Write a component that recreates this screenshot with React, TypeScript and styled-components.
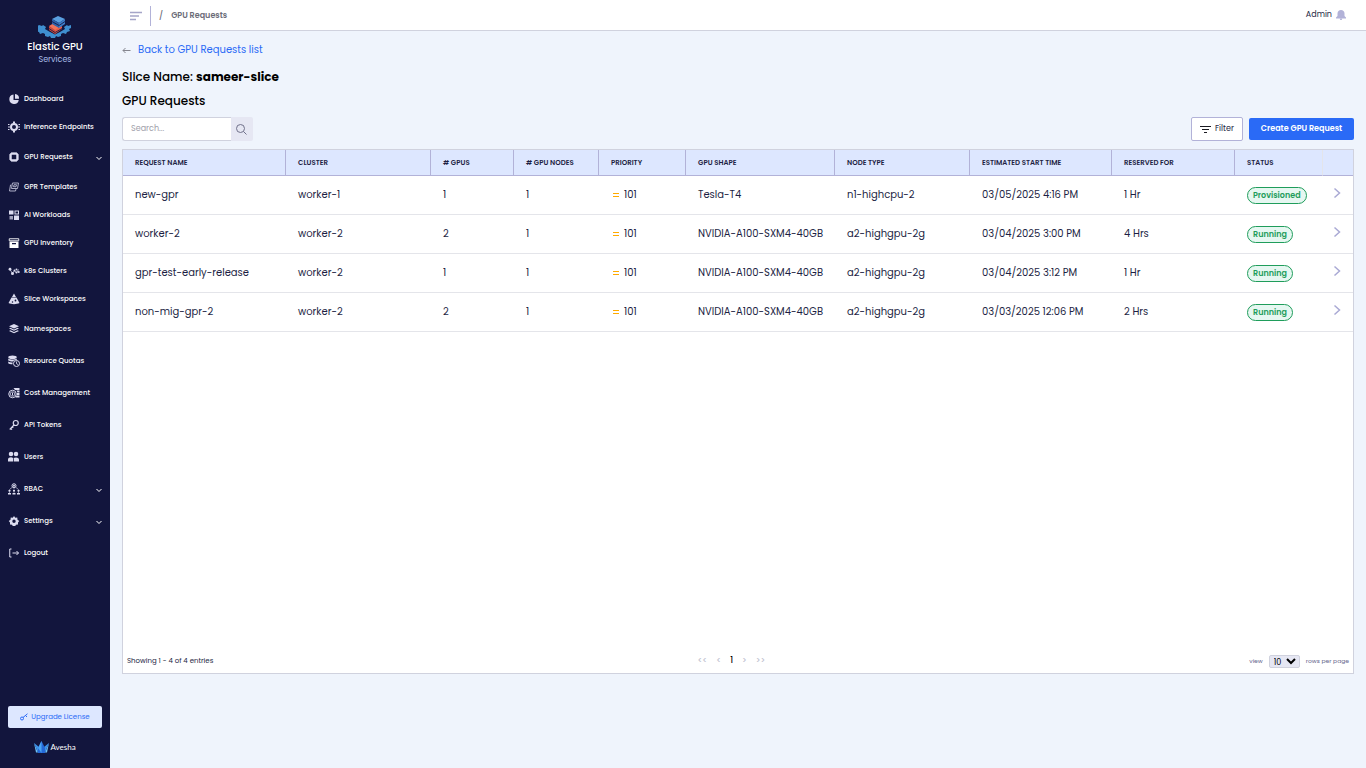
import React from "react";
import styled, { createGlobalStyle } from "styled-components";

const color = {
  navy: "#12153d",
  page: "#eff4fc",
  icon: "#dcdcf0",
  lilac: "#b2b2d8",
  line: "#d0d2de",
  rowLine: "#e4e5ea",
  head: "#dde7ff",
  blue: "#2a6af6",
  text: "#1d1f44",
  green: "#1f9d5b",
};

const GlobalStyle = createGlobalStyle`
  *, *::before, *::after { box-sizing: border-box; }
  body {
    margin: 0;
    background: ${color.page};
    color: ${color.text};
    font-family: Poppins, Inter, "Liberation Sans", sans-serif;
    font-size: 10px;
  }
  button, input, select { font-family: inherit; }
  svg { display: block; flex: none; }
`;

const Shell = styled.div`
  display: flex;
  min-height: 100vh;
`;

const Sidebar = styled.aside`
  display: flex;
  flex-direction: column;
  flex: 0 0 110px;
  min-height: 100vh;
  background: ${color.navy};
`;

const Brand = styled.div`
  display: flex;
  flex-direction: column;
  align-items: center;
  height: 85px;
  padding-top: 15px;
`;

const BrandName = styled.span`
  color: #fff;
  font-size: 10px;
  font-weight: 500;
  line-height: 16px;
`;

const BrandSub = styled.span`
  color: #a9bce6;
  font-size: 8px;
  line-height: 10px;
`;

const NavList = styled.ul`
  flex: 1;
  margin: 0;
  padding: 0;
  list-style: none;
`;

const NavLink = styled.a<{ $tall?: boolean }>`
  display: flex;
  align-items: center;
  gap: 4px;
  height: ${(p) => (p.$tall ? 32 : 28)}px;
  padding: 0 7px 0 8px;
  color: #fff;
  font-size: 7px;
  font-weight: 500;
  text-decoration: none;
  white-space: nowrap;

  > svg:last-child:not(:first-child) { margin-left: auto; }
`;

const SideFoot = styled.div`
  display: flex;
  flex-direction: column;
  align-items: center;
  gap: 11px;
  padding: 0 8px 13px;
`;

const Upgrade = styled.button`
  display: flex;
  align-items: center;
  justify-content: center;
  gap: 3px;
  width: 100%;
  height: 22px;
  padding: 0;
  border: 0;
  border-radius: 2px;
  background: ${color.head};
  color: ${color.blue};
  font-size: 7px;
`;

const Vendor = styled.div`
  display: flex;
  align-items: center;
  gap: 1px;
  height: 16px;
  color: #fff;
  font-family: Lato, sans-serif;
  font-size: 8px;
`;

const Main = styled.div`
  display: flex;
  flex: 1;
  flex-direction: column;
  min-width: 0;
`;

const TopBar = styled.header`
  display: flex;
  align-items: center;
  height: 31px;
  padding: 2px 20px 0;
  border-bottom: 1px solid ${color.line};
  background: #fff;
`;

const MenuButton = styled.button`
  padding: 0;
  border: 0;
  background: none;
`;

const Crumbs = styled.nav`
  display: flex;
  align-items: center;
  gap: 8px;
  height: 20px;
  margin-left: 8px;
  padding-left: 8px;
  border-left: 1px solid ${color.lilac};
  color: #6b6c78;
  font-size: 8px;
  font-weight: 600;
`;

const Slash = styled.span`
  font-size: 8px;
  font-weight: 500;
`;

const User = styled.div`
  display: flex;
  align-items: center;
  gap: 4px;
  margin-left: auto;
  padding-bottom: 2px;
  color: ${color.text};
  font-size: 8px;
  line-height: 12px;
`;

const Content = styled.main`
  padding: 11px 12px;
`;

const Back = styled.a`
  display: flex;
  align-items: center;
  gap: 7px;
  width: fit-content;
  height: 16px;
  color: ${color.blue};
  font-size: 10px;
  text-decoration: none;
`;

const Title = styled.h1`
  margin: 10px 0 6px;
  color: #000;
  font-size: 12px;
  font-weight: 500;
  line-height: 18px;

  strong { font-weight: 700; }
`;

const SubTitle = styled.h2`
  margin: 0;
  color: #000;
  font-size: 12px;
  font-weight: 500;
  line-height: 18px;
`;

const Toolbar = styled.div`
  display: flex;
  align-items: center;
  gap: 6px;
  margin: 7px 0 8px;
`;

const Search = styled.form`
  display: flex;
  height: 24px;
  margin-right: auto;
`;

const SearchInput = styled.input`
  width: 109px;
  padding: 0 8px;
  border: 1px solid ${color.line};
  border-right: 0;
  border-radius: 3px 0 0 3px;
  background: #fff;
  font-size: 8px;

  &::placeholder { color: #a0a0aa; }
`;

const SearchButton = styled.button`
  display: flex;
  align-items: center;
  width: 22px;
  padding: 0 5px;
  border: 0;
  border-radius: 0 2px 2px 0;
  background: #e6e7f3;
`;

const FilterButton = styled.button`
  display: flex;
  align-items: center;
  justify-content: center;
  gap: 4px;
  width: 52px;
  height: 24px;
  padding: 0;
  border: 1px solid ${color.lilac};
  border-radius: 2px;
  background: #fff;
  color: ${color.text};
  font-size: 8px;
`;

const CreateButton = styled.button`
  width: 105px;
  height: 22px;
  padding: 0;
  border: 0;
  border-radius: 2px;
  background: ${color.blue};
  color: #fff;
  font-size: 8px;
  font-weight: 600;
  white-space: nowrap;
`;

const Panel = styled.section`
  display: flex;
  flex-direction: column;
  justify-content: space-between;
  min-height: calc(100vh - 243px);
  border: 1px solid ${color.line};
  background: #fff;
`;

const Table = styled.table`
  width: 100%;
  border-collapse: separate;
  border-spacing: 0;
  table-layout: fixed;
`;

const Th = styled.th<{ $faint?: boolean }>`
  height: 26px;
  padding: 0 12px;
  border-right: 1px solid ${(p) => (p.$faint ? color.rowLine : color.lilac)};
  border-bottom: 1px solid ${color.lilac};
  background: ${color.head};
  color: ${color.text};
  font-size: 7px;
  font-weight: 600;
  text-align: left;
  text-transform: uppercase;
  white-space: nowrap;

  &:last-child { border-right: 0; }
`;

const Td = styled.td`
  height: 39px;
  padding: 0 12px;
  border-bottom: 1px solid ${color.rowLine};
  font-size: 10px;
  line-height: 16px;
  white-space: nowrap;

  &:last-child { padding: 0 9px; }
`;

const Priority = styled.span`
  display: flex;
  align-items: center;
  gap: 5px;
  padding-left: 2px;
`;

const Badge = styled.span`
  display: inline-block;
  padding: 0 5px;
  border: 1px solid ${color.green};
  border-radius: 9px;
  background: #e6f7f1;
  color: ${color.green};
  font-size: 8px;
  font-weight: 600;
  line-height: 15px;
`;

const OpenButton = styled.button`
  display: block;
  padding: 0 0 4px;
  border: 0;
  background: none;
`;

const PanelFoot = styled.footer`
  display: flex;
  align-items: center;
  justify-content: space-between;
  height: 25px;
  padding: 0 4px;
  font-size: 7px;
`;

const Pager = styled.nav`
  display: flex;
  align-items: center;
  gap: 9px;
`;

const PageButton = styled.button<{ $current?: boolean }>`
  padding: 0;
  border: 0;
  background: none;
  color: ${(p) => (p.$current ? "#000" : "#c0c1d0")};
  font-size: 8px;
  font-weight: 500;
  line-height: 10px;
`;

const RowsPerPage = styled.label`
  display: flex;
  align-items: center;
  justify-content: flex-end;
  gap: 6px;
  padding-top: 1px;
  color: #65668c;
  font-size: 6px;
`;

const RowsSelect = styled.select`
  width: 31px;
  height: 13px;
  padding: 0;
  border: 1px solid ${color.line};
  border-radius: 2px;
  background-color: #e6e7f3;
  color: #000;
  font-size: 8px;
`;

const Icon = ({ children, size = 12 }: { children: React.ReactNode; size?: number }) => (
  <svg width={size} height={size} viewBox="0 0 24 24" fill={color.icon} aria-hidden="true">
    {children}
  </svg>
);

const stroke = { fill: "none", stroke: color.icon, strokeWidth: 2 };

const icons = {
  dashboard: (
    <>
      <path d="M11 3a9.500 9.500 0 1 0 10.500 11H11z" />
      <path d="M14 2a9 9 0 0 1 8 9.500h-8z" />
    </>
  ),
  inference: (
    <>
      <circle cx="12" cy="12" r="6" {...stroke} strokeWidth={4} />
      <path d="M10 1h4v4h-4zM10 19h4v4h-4z" />
      <path d="M0 6h3v2H0zM0 11h4v2H0zM0 16h3v2H0zM21 6h3v2h-3zM20 11h4v2h-4zM21 16h3v2h-3z" />
    </>
  ),
  chip: (
    <>
      <rect x="5.500" y="5.500" width="13" height="13" rx="2" {...stroke} strokeWidth={4} />
      <path d="M7 2h2v3H7zM11 2h2v3h-2zM15 2h2v3h-2zM7 19h2v3H7zM11 19h2v3h-2zM15 19h2v3h-2zM2 7h3v2H2zM2 11h3v2H2zM2 15h3v2H2zM19 7h3v2h-3zM19 11h3v2h-3zM19 15h3v2h-3z" />
    </>
  ),
  templates: (
    <g {...stroke} strokeWidth={1.800} opacity="0.850">
      <path d="M9 4h12l-2 11H7z" />
      <path d="M7 8H5L3 20h12l1-4" />
      <path d="M12 7.500h5l-1 4h-5z" />
    </g>
  ),
  workloads: (
    <>
      <rect x="2" y="3" width="9" height="8" />
      <rect x="14" y="4" width="7" height="6" {...stroke} />
      <rect x="3" y="14" width="7" height="7" opacity="0.700" />
      <rect x="12" y="13" width="10" height="9" />
    </>
  ),
  inventory: (
    <>
      <path fill="#fff" d="M3 9h18v13H3z" />
      <path fill="none" stroke="#fff" strokeWidth="1.800" d="M2.500 3.500h19v4h-19z" />
      <path fill={color.navy} d="M8 12h8v2.500H8z" />
    </>
  ),
  clusters: (
    <>
      <path {...stroke} strokeWidth={1.500} d="M4 9l5 8 4-6 4 5 4-7" />
      <circle cx="4" cy="8.500" r="2.800" />
      <circle cx="9" cy="17" r="3" />
      <circle cx="13" cy="11" r="2" />
      <circle cx="17" cy="9" r="2" />
      <circle cx="17" cy="15" r="2" />
      <circle cx="21.500" cy="14" r="2" />
    </>
  ),
  slice: (
    <>
      <path d="M12 1l4 7H8zM7 9h10l6 11c-6 3-16 3-22 0z" />
      <circle cx="15" cy="15" r="1.800" fill={color.navy} />
      <circle cx="9" cy="18" r="1.500" fill={color.navy} />
    </>
  ),
  layers: (
    <>
      <path d="M12 2l10 4.500L12 11 2 6.500z" />
      <path d="M2 11l3-1.300 7 3.200 7-3.200 3 1.300-10 4.700z" />
      <path d="M2 16l3-1.300 7 3.200 7-3.200 3 1.300-10 4.700z" />
    </>
  ),
  quotas: (
    <>
      <ellipse cx="9" cy="4.500" rx="8.500" ry="3.500" />
      <path d="M.5 7c3 2.500 14 2.500 17 0v3c-4 0-6 1-7.500 3C6 13 2 12 .5 11zM.5 13c2 1.500 5 2 8.500 2v3.500C5 18.500 2 18 .5 16.500z" />
      <circle cx="17" cy="17" r="6" {...stroke} />
      <path {...stroke} strokeWidth={1.700} d="M17 13v4.500l3 1.500" />
    </>
  ),
  cost: (
    <>
      <circle cx="9" cy="14" r="7.500" {...stroke} />
      <circle cx="9" cy="14" r="4.500" {...stroke} strokeWidth={1.500} />
      <path d="M8 11h2v6H8z" />
      <path d="M11 2h12v4H14zM17 7h6v4h-4zM18 12h5v4h-5zM17 17h6v4h-8z" />
    </>
  ),
  key: (
    <g {...stroke} strokeWidth={2.400}>
      <circle cx="15.500" cy="8" r="5" />
      <path d="M12 12l-8.500 9M5 18.500l3 2.800M8 15l2.500 2.500" />
    </g>
  ),
  users: (
    <>
      <circle cx="6" cy="6" r="4.500" />
      <circle cx="16" cy="6" r="4.500" />
      <path d="M0 21v-4c0-3 3-4.500 6-4.500s4.500 1.500 4.500 4.500v4zM12 21v-4c0-1.500-.5-2.500-1-3 5-2.500 11-1 11 3v4z" />
    </>
  ),
  rbac: (
    <>
      <circle cx="12" cy="5.500" r="4" {...stroke} />
      <circle cx="12" cy="5.500" r="2" />
      <path {...stroke} strokeWidth={1.600} strokeDasharray="2 1" d="M12 11v11M8 9L3 13v9M16 9l5 4v9" />
      <path d="M0 20h6v3H0zM9 20h6v3H9zM18 20h6v3h-6zM1 14h4v3H1zM10 14h4v3h-4zM19 14h4v3h-4z" />
    </>
  ),
  settings: (
    <path
      fillRule="evenodd"
      d="M12 2l2.500 3.500 4-.5 .5 4.500 3.500 2.500-2.500 3 0 4-4 .5-1.500 2.500h-5L8 19.500l-4-.5v-4l-2.500-3L5 9.500 5.500 5l4 .5zm0 7a3.400 3.400 0 1 0 0 6.800A3.400 3.400 0 0 0 12 9z"
    />
  ),
  logout: <path {...stroke} d="M7 4H3.500v16H7M9 12h12M17 8l4 4-4 4" />,
};

const Caret = () => (
  <svg width="8" height="8" viewBox="0 0 8 8" fill="none" stroke="#fff" aria-hidden="true">
    <path d="M1.500 4L4 6.500 6.500 4" />
  </svg>
);

const navItems: { label: string; icon: keyof typeof icons; tall?: boolean; menu?: boolean }[] = [
  { label: "Dashboard", icon: "dashboard" },
  { label: "Inference Endpoints", icon: "inference" },
  { label: "GPU Requests", icon: "chip", tall: true, menu: true },
  { label: "GPR Templates", icon: "templates" },
  { label: "AI Workloads", icon: "workloads" },
  { label: "GPU Inventory", icon: "inventory" },
  { label: "k8s Clusters", icon: "clusters" },
  { label: "Slice Workspaces", icon: "slice" },
  { label: "Namespaces", icon: "layers", tall: true },
  { label: "Resource Quotas", icon: "quotas", tall: true },
  { label: "Cost Management", icon: "cost", tall: true },
  { label: "API Tokens", icon: "key", tall: true },
  { label: "Users", icon: "users", tall: true },
  { label: "RBAC", icon: "rbac", tall: true, menu: true },
  { label: "Settings", icon: "settings", tall: true, menu: true },
  { label: "Logout", icon: "logout", tall: true },
];

const columns = [
  { label: "Request Name", width: 163 },
  { label: "Cluster", width: 145 },
  { label: "# GPUs", width: 83 },
  { label: "# GPU Nodes", width: 85 },
  { label: "Priority", width: 87 },
  { label: "GPU Shape", width: 149 },
  { label: "Node Type", width: 135 },
  { label: "Estimated Start Time", width: 142 },
  { label: "Reserved For", width: 123 },
  { label: "Status", width: 88 },
  { label: "", width: 30 },
];

const rows = [
  ["new-gpr", "worker-1", "1", "1", "101", "Tesla-T4", "n1-highcpu-2", "03/05/2025 4:16 PM", "1 Hr", "Provisioned"],
  ["worker-2", "worker-2", "2", "1", "101", "NVIDIA-A100-SXM4-40GB", "a2-highgpu-2g", "03/04/2025 3:00 PM", "4 Hrs", "Running"],
  ["gpr-test-early-release", "worker-2", "1", "1", "101", "NVIDIA-A100-SXM4-40GB", "a2-highgpu-2g", "03/04/2025 3:12 PM", "1 Hr", "Running"],
  ["non-mig-gpr-2", "worker-2", "2", "1", "101", "NVIDIA-A100-SXM4-40GB", "a2-highgpu-2g", "03/03/2025 12:06 PM", "2 Hrs", "Running"],
];

const BrandLogo = () => (
  <svg width="34" height="24" viewBox="0 0 34 24" aria-hidden="true">
    <path
      fill="#3f8fd0"
      d="M1 10l3 1 1-1 3 2-1 2 5 3 5 2.500 5-2.500 5-3-1-2 3-2 1 1 3-1v3l-2 1 1 2-3 1-1 2-3-1-2 1v2l-3 1-2-1-1 2h-4l-1-2-2 1-3-1v-2l-2-1-3 1-1-2-3-1 1-2-2-1z"
    />
    <path fill="#f0745a" d="M11 11l5-3 8 4-7 4z" />
    <path fill="#cf4a3e" d="M11 11l6 4v4l-6-4z" />
    <path fill="#e25d4b" d="M17 15l7-4v3l-7 5z" />
    <path fill="#5aa0e0" d="M14 4l6-3 7 3-6 4z" />
    <path fill="#2c62ac" d="M14 4l7 4v5l-7-4z" />
    <path fill="#3b7cc8" d="M21 8l6-4v5l-6 4z" />
    <path fill="none" stroke={color.navy} strokeWidth="0.800" d="M14 6.500l7 4 6-4M11 13.500l6 4 7-4" />
  </svg>
);

const VendorLogo = () => (
  <svg width="15" height="12" viewBox="0 0 15 12" aria-hidden="true">
    <path fill="#6cc0f5" d="M0 2l4 9.500H2zM15 2l-4 9.500h2z" />
    <path fill="#3d92ea" d="M0 2l5 4-1 5.500zM15 2l-5 4 1 5.500z" />
    <path fill="#2468d8" d="M7.500 0L11 7v5H4V7z" />
    <path fill="#4aa4f2" d="M7.500 0v12L4 7z" />
  </svg>
);

const BellIcon = () => (
  <svg width="10" height="10" viewBox="0 0 10 10" fill={color.lilac} aria-hidden="true">
    <path d="M5 0C3 0 1.500 1.500 1.500 3.500V6L0 7.500v.9h10v-.9L8.500 6V3.500C8.500 1.500 7 0 5 0zM3.800 8.700h2.400c0 1.700-2.400 1.700-2.400 0z" />
  </svg>
);

const App = () => (
  <>
    <GlobalStyle />
    <Shell>
      <Sidebar>
        <Brand>
          <BrandLogo />
          <BrandName>Elastic GPU</BrandName>
          <BrandSub>Services</BrandSub>
        </Brand>
        <NavList>
          {navItems.map((item) => (
            <li key={item.label}>
              <NavLink href="#" $tall={item.tall}>
                <Icon>{icons[item.icon]}</Icon>
                {item.label}
                {item.menu && <Caret />}
              </NavLink>
            </li>
          ))}
        </NavList>
        <SideFoot>
          <Upgrade type="button">
            <svg width="8" height="8" viewBox="0 0 8 8" fill="none" stroke={color.blue} aria-hidden="true">
              <circle cx="2" cy="5.500" r="1.500" />
              <path d="M3 4.500L7.500 .8M5.500 2.500L7 4" />
            </svg>
            Upgrade License
          </Upgrade>
          <Vendor>
            <VendorLogo />
            Avesha
          </Vendor>
        </SideFoot>
      </Sidebar>
      <Main>
        <TopBar>
          <MenuButton type="button" aria-label="Toggle menu">
            <svg width="12" height="10" viewBox="0 0 12 10" stroke="#a5a5c8" strokeWidth="1.400" aria-hidden="true">
              <path d="M0 1.500h12M0 5h9M0 8.500h6" />
            </svg>
          </MenuButton>
          <Crumbs aria-label="Breadcrumb">
            <Slash>/</Slash>
            <span>GPU Requests</span>
          </Crumbs>
          <User>
            Admin
            <BellIcon />
          </User>
        </TopBar>
        <Content>
          <Back href="#">
            <svg width="9" height="8" viewBox="0 0 9 8" fill="none" stroke="#85868f" aria-hidden="true">
              <path d="M8.500 4.500H1M3.500 2L1 4.500 3.500 7" />
            </svg>
            Back to GPU Requests list
          </Back>
          <Title>
            Slice Name: <strong>sameer-slice</strong>
          </Title>
          <SubTitle>GPU Requests</SubTitle>
          <Toolbar>
            <Search role="search">
              <SearchInput type="text" placeholder="Search..." aria-label="Search" />
              <SearchButton type="button" aria-label="Search">
                <svg width="11" height="11" viewBox="0 0 11 11" fill="none" stroke="#70718a" aria-hidden="true">
                  <circle cx="4.500" cy="4.500" r="4" />
                  <path d="M7.500 7.500l3 3" />
                </svg>
              </SearchButton>
            </Search>
            <FilterButton type="button">
              <svg width="11" height="7" viewBox="0 0 11 7" stroke="#1a1a22" aria-hidden="true">
                <path d="M0 .5h11M2 3.500h7M4 6.500h3" />
              </svg>
              Filter
            </FilterButton>
            <CreateButton type="button">Create GPU Request</CreateButton>
          </Toolbar>
          <Panel>
            <Table>
              <colgroup>
                {columns.map((c) => (
                  <col key={c.label} width={c.width} />
                ))}
              </colgroup>
              <thead>
                <tr>
                  {columns.map((c) => (
                    <Th key={c.label} scope="col" $faint={c.label === "Status"}>
                      {c.label}
                    </Th>
                  ))}
                </tr>
              </thead>
              <tbody>
                {rows.map((row) => (
                  <tr key={row[0]}>
                    {row.map((value, i) => (
                      <Td key={columns[i].label}>
                        {columns[i].label === "Priority" ? (
                          <Priority>
                            <svg width="6" height="6" viewBox="0 0 6 6" stroke="#ffab00" aria-hidden="true">
                              <path d="M0 1.500h6M0 4.500h6" />
                            </svg>
                            {value}
                          </Priority>
                        ) : columns[i].label === "Status" ? (
                          <Badge>{value}</Badge>
                        ) : (
                          value
                        )}
                      </Td>
                    ))}
                    <Td>
                      <OpenButton type="button" aria-label={`Open ${row[0]}`}>
                        <svg width="10" height="12" viewBox="0 0 10 12" fill="none" stroke="#a9a9d4" strokeWidth="1.500" aria-hidden="true">
                          <path d="M2.500 1.500L7.500 6l-5 4.500" />
                        </svg>
                      </OpenButton>
                    </Td>
                  </tr>
                ))}
              </tbody>
            </Table>
            <PanelFoot>
              <span>Showing 1 - 4 of 4 entries</span>
              <Pager aria-label="Pagination">
                <PageButton type="button">&lt;&lt;</PageButton>
                <PageButton type="button">&lt;</PageButton>
                <PageButton type="button" $current>1</PageButton>
                <PageButton type="button">&gt;</PageButton>
                <PageButton type="button">&gt;&gt;</PageButton>
              </Pager>
              <RowsPerPage>
                view
                <RowsSelect defaultValue="10">
                  <option>10</option>
                  <option>20</option>
                  <option>50</option>
                </RowsSelect>
                rows per page
              </RowsPerPage>
            </PanelFoot>
          </Panel>
        </Content>
      </Main>
    </Shell>
  </>
);

export default App;
